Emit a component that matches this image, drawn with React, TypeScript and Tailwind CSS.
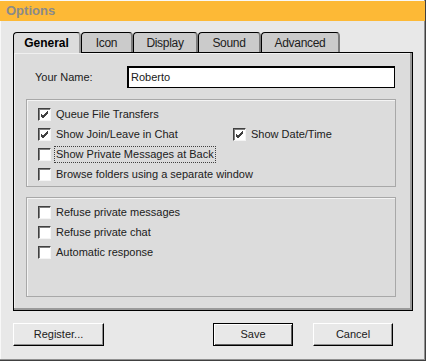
import React from 'react';

const TABS = [
  { label: 'General', w: 68 },
  { label: 'Icon', w: 52 },
  { label: 'Display', w: 65 },
  { label: 'Sound', w: 63 },
  { label: 'Advanced', w: 79 },
];

function Check({ checked }: { checked?: boolean }) {
  return (
    <span className="relative w-[13px] h-[13px] shrink-0 bg-white border-t border-l border-t-[#404040] border-l-[#404040] border-b border-r border-b-[#f4f4f4] border-r-[#f4f4f4] shadow-[inset_1px_1px_0_#808080]">
      {checked && (
        <svg className="absolute left-[1px] top-[1px]" width="9" height="9" viewBox="0 0 9 9">
          <path d="M1 4 L3 6 L8 1 M1 5 L3 7 L8 2 M1 6 L3 8 L8 3" stroke="#404040" strokeWidth="1" fill="none" />
        </svg>
      )}
    </span>
  );
}

function Row({ label, checked, focus, className = '' }: { label: string; checked?: boolean; focus?: boolean; className?: string }) {
  return (
    <div className={`flex items-center h-[20px] gap-[4px] ${className}`}>
      <Check checked={checked} />
      <span className={`px-[1px] leading-[15px] ${focus ? 'outline-1 outline-dotted outline-[#404040]' : ''}`}>{label}</span>
    </div>
  );
}

function Button({ label, w, def }: { label: string; w: string; def?: boolean }) {
  return (
    <button
      className={`${w} h-[23px] bg-[#e8e8e8] text-[#202020] ${
        def
          ? 'border border-black shadow-[inset_1px_1px_0_#ffffff,inset_-1px_-1px_0_#606060]'
          : 'border-t border-l border-t-white border-l-white border-b border-r border-b-black border-r-black shadow-[inset_-1px_-1px_0_#909090]'
      }`}
    >
      {label}
    </button>
  );
}

export default function App() {
  return (
    <div
      className="w-[426px] h-[361px] bg-[#e8e8e8] flex flex-col text-[11px] text-[#202020] border-r border-b border-r-[#404040] border-b-[#404040] shadow-[inset_-1px_-1px_0_#909090,inset_1px_1px_0_#f8f8f8]"
      style={{ fontFamily: '"Liberation Sans", Arial, sans-serif' }}
    >
      {/* Title */}
      <div className="mt-[1px] h-[20px] bg-[#fdb936] flex items-center px-[6px] text-[13px] font-bold text-[#8a8a8a]">
        Options
      </div>

      {/* Tabs */}
      <div className="ml-[13px] mt-[11px] flex items-end h-[20px]">
        {TABS.map((t, i) => (
          <div
            key={t.label}
            style={{ width: t.w }}
            className={`h-[20px] flex items-center justify-center rounded-t-[4px] border-t border-l border-black border-r-2 border-r-[#7c7c7c] ${
              i === 0
                ? 'relative z-10 -mb-[1px] h-[21px] bg-[#dcdcdc] font-bold text-[12px] text-black border-r-[#9a9a9a]'
                : 'bg-[#cbcbcb] text-[12px] tracking-[-0.3px]'
            }`}
          >
            {t.label}
          </div>
        ))}
      </div>

      {/* Panel */}
      <div className="ml-[13px] w-[400px] h-[259px] bg-[#dcdcdc] border border-black shadow-[inset_-2px_-2px_0_#9a9a9a,inset_1px_1px_0_#f0f0f0] flex flex-col">
        <div className="flex items-center mt-[13px] h-[22px]">
          <span className="ml-[21px] w-[92px]">Your Name:</span>
          <div className="w-[268px] h-[22px] bg-white border border-black border-t-2 border-l-2 flex items-center pl-[2px]">
            Roberto
          </div>
        </div>

        <div className="ml-[12px] mt-[11px] w-[370px] h-[88px] border border-[#a8a8a8] shadow-[inset_1px_1px_0_#f4f4f4] pt-[4px] pl-[11px]">
          <Row label="Queue File Transfers" checked />
          <div className="flex">
            <Row label="Show Join/Leave in Chat" checked className="w-[195px]" />
            <Row label="Show Date/Time" checked />
          </div>
          <Row label="Show Private Messages at Back" focus />
          <Row label="Browse folders using a separate window" />
        </div>

        <div className="ml-[12px] mt-[10px] w-[370px] h-[100px] border border-[#a8a8a8] shadow-[inset_1px_1px_0_#f4f4f4] pt-[4px] pl-[11px]">
          <Row label="Refuse private messages" />
          <Row label="Refuse private chat" />
          <Row label="Automatic response" />
        </div>
      </div>

      {/* Buttons */}
      <div className="mt-[12px] ml-[13px] flex">
        <Button label="Register..." w="w-[91px]" />
        <div className="ml-[109px]">
          <Button label="Save" w="w-[80px]" def />
        </div>
        <div className="ml-[20px]">
          <Button label="Cancel" w="w-[80px]" />
        </div>
      </div>
    </div>
  );
}
